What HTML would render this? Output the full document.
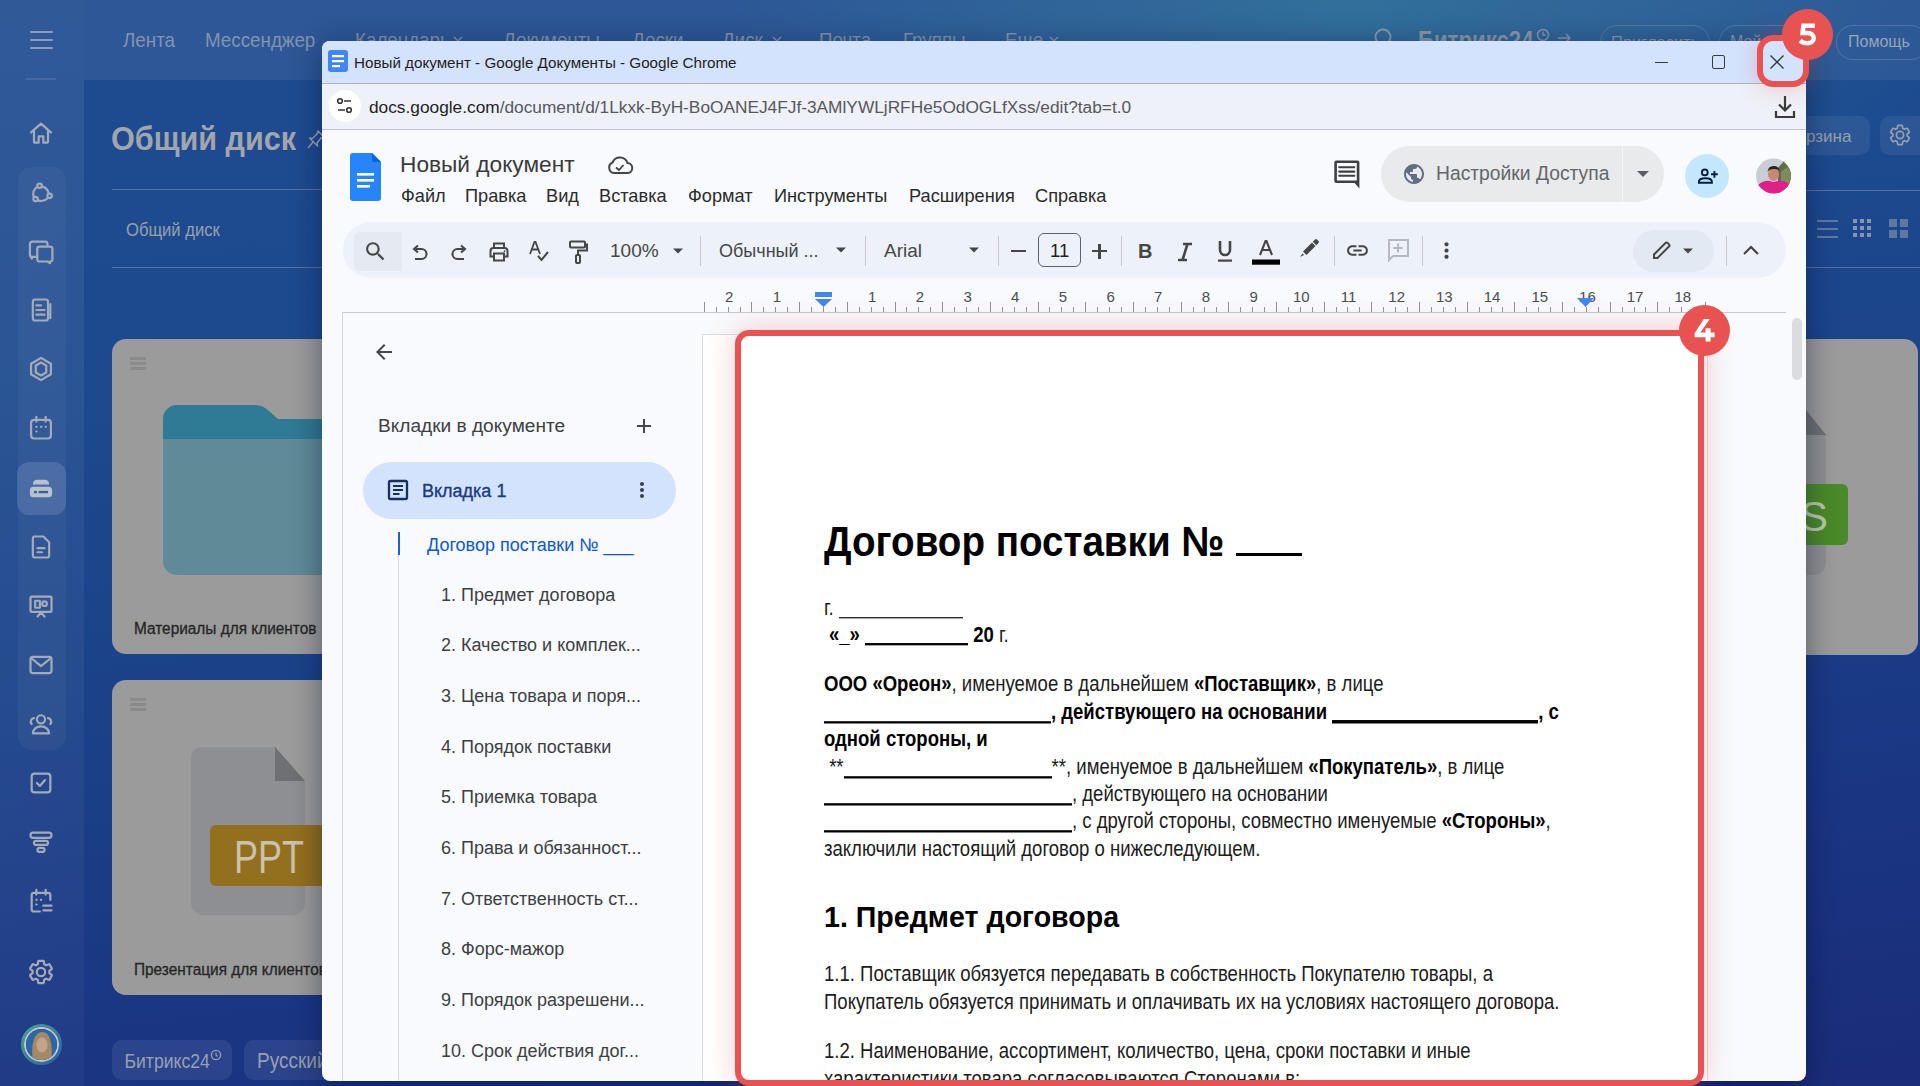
<!DOCTYPE html><html><head><meta charset="utf-8"><style>
html,body{margin:0;padding:0;width:1920px;height:1086px;overflow:hidden;}
body{position:relative;font-family:"Liberation Sans",sans-serif;background:#1d4a8f;}
.t{position:absolute;white-space:pre;line-height:1;}
.dl{color:#1c1c1c;} .dl b{color:#000;}
.r{position:absolute;}
</style></head><body>
<div class="r" style="left:0px;top:0px;width:1920px;height:1086px;background:linear-gradient(172deg,#1f4c90 0%,#1d4a8f 28%,#1b4289 52%,#1a3784 76%,#1b2c79 100%);"></div>
<div class="r" style="left:700px;top:-260px;width:1300px;height:520px;background:radial-gradient(ellipse at center,rgba(40,120,150,0.6) 0%,rgba(40,120,150,0) 70%);"></div>
<div class="r" style="left:0px;top:0px;width:84px;height:1086px;background:linear-gradient(180deg,rgba(255,255,255,0.075),rgba(255,255,255,0.03));"></div>
<div class="r" style="left:84px;top:0px;width:1836px;height:80px;background:rgba(255,255,255,0.065);"></div>
<div class="r" style="left:30px;top:31px;width:23px;height:2px;background:#8d9bb4;border-radius:1px;"></div>
<div class="r" style="left:30px;top:39px;width:23px;height:2px;background:#8d9bb4;border-radius:1px;"></div>
<div class="r" style="left:30px;top:47px;width:23px;height:2px;background:#8d9bb4;border-radius:1px;"></div>
<div class="r" style="left:26px;top:78px;width:30px;height:2px;background:rgba(160,175,200,0.2);"></div>
<div class="r" style="left:18px;top:167px;width:48px;height:583px;background:rgba(255,255,255,0.04);border-radius:14px;"></div>
<div class="r" style="left:17px;top:462px;width:49px;height:53px;background:rgba(255,255,255,0.13);border-radius:12px;"></div>
<svg class="r" style="left:27px;top:119px;" width="28" height="28" viewBox="0 0 24 24"><g fill="none" stroke="#a4abb6" stroke-width="1.9" stroke-linecap="round" stroke-linejoin="round"><path d="M3.5 11.5 L12 4 L20.5 11.5 M6 9.5 V19.5 A0.8 0.8 0 0 0 6.8 20.3 H10 V14.8 H14 V20.3 H17.2 A0.8 0.8 0 0 0 18 19.5 V9.5"/></g></svg>
<svg class="r" style="left:27px;top:179px;" width="28" height="28" viewBox="0 0 24 24"><g fill="none" stroke="#a4abb6" stroke-width="1.9" stroke-linecap="round" stroke-linejoin="round"><circle cx="10.8" cy="5.8" r="1.9"/><circle cx="7.4" cy="17.2" r="1.9"/><circle cx="19.4" cy="14.4" r="1.9"/><path d="M13 6.3 A8 8 0 0 1 18.6 12.3 M17.7 16.5 A8 8 0 0 1 9.4 18.3 M5.7 15.4 A8 8 0 0 1 8.8 6.8"/></g></svg>
<svg class="r" style="left:27px;top:237px;" width="28" height="28" viewBox="0 0 24 24"><g fill="none" stroke="#a4abb6" stroke-width="1.9" stroke-linecap="round" stroke-linejoin="round"><path d="M4.5 4 H15.5 A2 2 0 0 1 17.5 6 V6.8 M8.5 17 H4.5 A2 2 0 0 1 2.5 15 V6 A2 2 0 0 1 4.5 4 M2.8 16.5 L4.2 18.6"/><path d="M10.8 8.3 H19.8 A2 2 0 0 1 21.8 10.3 V19.5 A2 2 0 0 1 19.8 21 V22.5 L17.6 21 H10.8 A2 2 0 0 1 8.8 19 V10.3 A2 2 0 0 1 10.8 8.3Z"/></g></svg>
<svg class="r" style="left:27px;top:296px;" width="28" height="28" viewBox="0 0 24 24"><g fill="none" stroke="#a4abb6" stroke-width="1.9" stroke-linecap="round" stroke-linejoin="round"><rect x="5" y="3" width="13" height="18" rx="2"/><path d="M8 8 H12 M8 12 H15 M8 16 H15 M20 7 V19"/></g></svg>
<svg class="r" style="left:27px;top:355px;" width="28" height="28" viewBox="0 0 24 24"><g fill="none" stroke="#a4abb6" stroke-width="1.9" stroke-linecap="round" stroke-linejoin="round"><path d="M12 2.5 L20.5 7.5 V16.5 L12 21.5 L3.5 16.5 V7.5Z"/><path d="M12 6.5 L16.5 9 V15 L12 17.5 L7.5 15 V9Z"/></g></svg>
<svg class="r" style="left:27px;top:414px;" width="28" height="28" viewBox="0 0 24 24"><g fill="none" stroke="#a4abb6" stroke-width="1.9" stroke-linecap="round" stroke-linejoin="round"><rect x="3.5" y="5" width="17" height="16" rx="2.5"/><path d="M8 2.5 V6.5 M16 2.5 V6.5 M8 11 H8.2 M12 11 H12.2 M16 11 H16.2 M8 15 H8.2"/></g></svg>
<svg class="r" style="left:27px;top:474px;" width="28" height="28" viewBox="0 0 24 24"><rect x="2.5" y="11" width="19" height="9" rx="3" fill="#b8c1cf"/><path d="M5 9 Q5 5 9 5 H15 Q19 5 19 9" fill="#b8c1cf"/><rect x="6" y="14.5" width="2.5" height="2" fill="#3b5f95"/><rect x="10" y="14.5" width="8" height="2" fill="#3b5f95"/></svg>
<svg class="r" style="left:27px;top:533px;" width="28" height="28" viewBox="0 0 24 24"><g fill="none" stroke="#a4abb6" stroke-width="1.9" stroke-linecap="round" stroke-linejoin="round"><path d="M6 3 H14 L19 8 V19 A2 2 0 0 1 17 21 H7 A2 2 0 0 1 5 19 V5 A2 2 0 0 1 6 3Z M9 13 H15 M9 16.5 H13"/></g></svg>
<svg class="r" style="left:27px;top:592px;" width="28" height="28" viewBox="0 0 24 24"><g fill="none" stroke="#a4abb6" stroke-width="1.9" stroke-linecap="round" stroke-linejoin="round"><rect x="3" y="4" width="18" height="13" rx="1"/><rect x="7" y="7.5" width="4" height="6"/><circle cx="15" cy="10" r="2"/><path d="M9 21 L12 17.5 L15 21"/></g></svg>
<svg class="r" style="left:27px;top:651px;" width="28" height="28" viewBox="0 0 24 24"><g fill="none" stroke="#a4abb6" stroke-width="1.9" stroke-linecap="round" stroke-linejoin="round"><rect x="3" y="5" width="18" height="14" rx="2"/><path d="M3.5 6 L12 13 L20.5 6"/></g></svg>
<svg class="r" style="left:27px;top:710px;" width="28" height="28" viewBox="0 0 24 24"><g fill="none" stroke="#a4abb6" stroke-width="1.9" stroke-linecap="round" stroke-linejoin="round"><circle cx="12" cy="8" r="3.5"/><path d="M5 20 A7 6 0 0 1 19 20Z"/><path d="M4 12 A3 3 0 0 1 6 7 M20 12 A3 3 0 0 0 18 7"/></g></svg>
<svg class="r" style="left:27px;top:769px;" width="28" height="28" viewBox="0 0 24 24"><g fill="none" stroke="#a4abb6" stroke-width="1.9" stroke-linecap="round" stroke-linejoin="round"><rect x="4" y="4" width="16" height="16" rx="2.5"/><path d="M8.5 12 L11 14.5 L15.5 9.5"/></g></svg>
<svg class="r" style="left:27px;top:828px;" width="28" height="28" viewBox="0 0 24 24"><g fill="none" stroke="#a4abb6" stroke-width="1.9" stroke-linecap="round" stroke-linejoin="round"><rect x="3" y="4" width="18" height="4.5" rx="2.2"/><rect x="6" y="11" width="12" height="3.5" rx="1.7"/><rect x="9" y="17" width="6" height="3.5" rx="1.7"/></g></svg>
<svg class="r" style="left:27px;top:887px;" width="28" height="28" viewBox="0 0 24 24"><g fill="none" stroke="#a4abb6" stroke-width="1.9" stroke-linecap="round" stroke-linejoin="round"><path d="M20 11 V7 A2 2 0 0 0 18 5 H6 A2 2 0 0 0 4 7 V19 A2 2 0 0 0 6 21 H11 M8 2.5 V6.5 M16 2.5 V6.5 M8 11 H8.2 M12 11 H12.2 M8 15 H8.2 M14 16 H21 M14 20 H21"/></g></svg>
<svg class="r" style="left:27px;top:958px;" width="28" height="28" viewBox="0 0 24 24"><g fill="none" stroke="#a4abb6" stroke-width="1.9" stroke-linecap="round" stroke-linejoin="round"><path d="M19.14 12.94c.04-.3.06-.61.06-.94 0-.32-.02-.64-.07-.94l2.03-1.58c.18-.14.23-.41.12-.61l-1.92-3.32c-.12-.22-.37-.29-.59-.22l-2.39.96c-.5-.38-1.03-.7-1.62-.94l-.36-2.540c-.04-.24-.24-.41-.48-.41h-3.84c-.24 0-.43.17-.47.41l-.36 2.54c-.59.24-1.13.57-1.62.94l-2.39-.96c-.22-.08-.47 0-.59.22L2.74 8.87c-.12.21-.08.47.12.61l2.030 1.58c-.05.3-.09.63-.09.94s.02.64.07.94l-2.03 1.58c-.18.14-.23.41-.12.61l1.92 3.32c.12.22.37.29.59.22l2.39-.96c.5.38 1.03.7 1.62.94l.36 2.54c.05.24.24.41.48.41h3.84c.24 0 .44-.17.47-.41l.36-2.54c.59-.24 1.13-.56 1.62-.94l2.39.96c.22.08.47 0 .59-.22l1.92-3.32c.12-.22.07-.47-.12-.61l-2.01-1.58zM12 15.6c-1.98 0-3.6-1.62-3.6-3.6s1.62-3.6 3.6-3.6 3.6 1.62 3.6 3.6-1.62 3.6-3.6 3.6z"/></g></svg>
<svg class="r" style="left:21px;top:1024px;" width="41" height="41" viewBox="0 0 41 41"><defs><linearGradient id="rg" x1="0" y1="0" x2="1" y2="1"><stop offset="0" stop-color="#46a88c"/><stop offset="1" stop-color="#2a5ea8"/></linearGradient><clipPath id="ac"><circle cx="20.5" cy="20.5" r="15.5"/></clipPath></defs><circle cx="20.5" cy="20.5" r="19" fill="none" stroke="url(#rg)" stroke-width="3"/><circle cx="20.5" cy="20.5" r="16.5" fill="none" stroke="#c4c6cc" stroke-width="2"/><g clip-path="url(#ac)"><rect width="41" height="41" fill="#2c68a6"/><path d="M12 38 Q10 24 13 15 Q16 8 21 8 Q27 8 29 15 Q32 24 30 38Z" fill="#a48a62"/><ellipse cx="21" cy="21" rx="5.6" ry="7.5" fill="#c2a48c"/><path d="M14 40 Q21 32 28 40Z" fill="#b8b8b8"/></g></svg>
<div class="t " style="left:123px;top:31.59px;font-size:18.8px;color:#8593ab;transform:scaleY(1.1);transform-origin:0 15.91px;">Лента</div>
<div class="t " style="left:205px;top:31.59px;font-size:18.8px;color:#8593ab;transform:scaleY(1.1);transform-origin:0 15.91px;">Мессенджер</div>
<div class="t " style="left:355px;top:31.59px;font-size:18.8px;color:#8593ab;transform:scaleY(1.1);transform-origin:0 15.91px;">Календарь</div>
<div class="t " style="left:503px;top:31.59px;font-size:18.8px;color:#8593ab;transform:scaleY(1.1);transform-origin:0 15.91px;">Документы</div>
<div class="t " style="left:632px;top:31.59px;font-size:18.8px;color:#8593ab;transform:scaleY(1.1);transform-origin:0 15.91px;">Доски</div>
<div class="t " style="left:722px;top:31.59px;font-size:18.8px;color:#8593ab;transform:scaleY(1.1);transform-origin:0 15.91px;">Диск</div>
<div class="t " style="left:819px;top:31.59px;font-size:18.8px;color:#8593ab;transform:scaleY(1.1);transform-origin:0 15.91px;">Почта</div>
<div class="t " style="left:903px;top:31.59px;font-size:18.8px;color:#8593ab;transform:scaleY(1.1);transform-origin:0 15.91px;">Группы</div>
<div class="t " style="left:1005px;top:31.59px;font-size:18.8px;color:#8593ab;transform:scaleY(1.1);transform-origin:0 15.91px;">Еще</div>
<svg class="r" style="left:453px;top:35px;" width="10" height="8" viewBox="0 0 10 8"><path d="M1 2 L5 6 L9 2" fill="none" stroke="#8593ab" stroke-width="1.5"/></svg>
<svg class="r" style="left:772px;top:35px;" width="10" height="8" viewBox="0 0 10 8"><path d="M1 2 L5 6 L9 2" fill="none" stroke="#8593ab" stroke-width="1.5"/></svg>
<svg class="r" style="left:1049px;top:35px;" width="10" height="8" viewBox="0 0 10 8"><path d="M1 2 L5 6 L9 2" fill="none" stroke="#8593ab" stroke-width="1.5"/></svg>
<div class="t " style="left:1418px;top:30.91px;font-size:22.2px;color:#8a96a8;font-weight:bold;transform:scaleY(1.2);transform-origin:0 18.79px;">Битрикс24</div>
<svg class="r" style="left:1372px;top:27px;" width="24" height="24" viewBox="0 0 24 24"><circle cx="11" cy="10" r="7.5" fill="none" stroke="#8a96a8" stroke-width="2"/></svg>
<svg class="r" style="left:1536px;top:28px;" width="14" height="14" viewBox="0 0 14 14"><circle cx="7" cy="7" r="5.5" fill="none" stroke="#8a96a8" stroke-width="1.5"/><path d="M7 3.5 V7 H9.5" fill="none" stroke="#8a96a8" stroke-width="1.3"/></svg>
<svg class="r" style="left:1557px;top:32px;" width="16" height="12" viewBox="0 0 16 12"><path d="M1 6 H13 M9 2 L13 6 L9 10" fill="none" stroke="#8a96a8" stroke-width="1.5"/></svg>
<div class="r" style="left:1600px;top:25px;width:108px;height:33px;border:1.5px solid rgba(150,165,185,0.35);border-radius:17px;"></div>
<div class="t " style="left:1611px;top:34.03px;font-size:16.5px;color:#8a96a8;">Пригласить</div>
<div class="r" style="left:1719px;top:25px;width:96px;height:33px;border:1.5px solid rgba(150,165,185,0.35);border-radius:17px;"></div>
<div class="t " style="left:1730px;top:34.46px;font-size:16px;color:#8a96a8;">Мой тариф</div>
<div class="r" style="left:1836px;top:25px;width:90px;height:33px;border:1.5px solid rgba(150,165,185,0.35);border-radius:17px;"></div>
<div class="t " style="left:1848px;top:34.46px;font-size:16px;color:#98a4b4;">Помощь</div>
<div class="t " style="left:111px;top:123.60px;font-size:30.6px;color:#a2a5ab;font-weight:bold;transform:scaleY(1.1);transform-origin:0 25.90px;">Общий диск</div>
<div class="r" style="left:112px;top:189px;width:210px;height:1px;background:rgba(150,165,190,0.45);"></div>
<div class="t " style="left:126px;top:222.95px;font-size:16.6px;color:#98a0ac;transform:scaleY(1.1);transform-origin:0 14.05px;">Общий диск</div>
<div class="r" style="left:112px;top:267px;width:210px;height:1px;background:rgba(150,165,190,0.45);"></div>
<div class="r" style="left:1790px;top:116px;width:80px;height:39px;background:rgba(255,255,255,0.07);border-radius:10px;"></div>
<div class="t " style="left:1806px;top:127.61px;font-size:17px;color:#98a0ac;">рзина</div>
<div class="r" style="left:1880px;top:116px;width:50px;height:39px;background:rgba(255,255,255,0.07);border-radius:10px;"></div>
<svg class="r" style="left:1888px;top:123px;" width="24" height="24" viewBox="0 0 24 24"><path d="M19.14 12.94c.04-.3.06-.61.06-.94 0-.32-.02-.64-.07-.94l2.03-1.58c.18-.14.23-.41.12-.61l-1.92-3.32c-.12-.22-.37-.29-.59-.22l-2.39.96c-.5-.38-1.03-.7-1.62-.94l-.36-2.540c-.04-.24-.24-.41-.48-.41h-3.84c-.24 0-.43.17-.47.41l-.36 2.54c-.59.24-1.13.57-1.62.94l-2.39-.96c-.22-.08-.47 0-.59.22L2.74 8.87c-.12.21-.08.47.12.61l2.030 1.58c-.05.3-.09.63-.09.94s.02.64.07.94l-2.03 1.58c-.18.14-.23.41-.12.61l1.92 3.32c.12.22.37.29.59.22l2.39-.96c.5.38 1.03.7 1.62.94l.36 2.54c.05.24.24.41.48.41h3.84c.24 0 .44-.17.47-.41l.36-2.54c.59-.24 1.13-.56 1.62-.94l2.39.96c.22.08.47 0 .59-.22l1.92-3.32c.12-.22.07-.47-.12-.61l-2.01-1.58zM12 15.6c-1.98 0-3.6-1.62-3.6-3.6s1.62-3.6 3.6-3.6 3.6 1.62 3.6 3.6-1.62 3.6-3.6 3.6z" fill="none" stroke="#98a0ac" stroke-width="1.7"/></svg>
<div class="r" style="left:1806px;top:190px;width:114px;height:1px;background:rgba(150,165,190,0.45);"></div>
<div class="r" style="left:1806px;top:267px;width:114px;height:1px;background:rgba(150,165,190,0.45);"></div>
<div class="r" style="left:1817px;top:220px;width:21px;height:2px;background:rgba(150,160,175,0.55);"></div>
<div class="r" style="left:1817px;top:228px;width:21px;height:2px;background:rgba(150,160,175,0.55);"></div>
<div class="r" style="left:1817px;top:236px;width:21px;height:2px;background:rgba(150,160,175,0.55);"></div>
<div class="r" style="left:1853px;top:219px;width:4px;height:4px;background:rgba(170,175,185,0.75);"></div>
<div class="r" style="left:1853px;top:226px;width:4px;height:4px;background:rgba(170,175,185,0.75);"></div>
<div class="r" style="left:1853px;top:233px;width:4px;height:4px;background:rgba(170,175,185,0.75);"></div>
<div class="r" style="left:1860px;top:219px;width:4px;height:4px;background:rgba(170,175,185,0.75);"></div>
<div class="r" style="left:1860px;top:226px;width:4px;height:4px;background:rgba(170,175,185,0.75);"></div>
<div class="r" style="left:1860px;top:233px;width:4px;height:4px;background:rgba(170,175,185,0.75);"></div>
<div class="r" style="left:1867px;top:219px;width:4px;height:4px;background:rgba(170,175,185,0.75);"></div>
<div class="r" style="left:1867px;top:226px;width:4px;height:4px;background:rgba(170,175,185,0.75);"></div>
<div class="r" style="left:1867px;top:233px;width:4px;height:4px;background:rgba(170,175,185,0.75);"></div>
<div class="r" style="left:1889px;top:219px;width:8px;height:8px;background:rgba(150,160,175,0.55);"></div>
<div class="r" style="left:1889px;top:230px;width:8px;height:8px;background:rgba(150,160,175,0.55);"></div>
<div class="r" style="left:1900px;top:219px;width:8px;height:8px;background:rgba(150,160,175,0.55);"></div>
<div class="r" style="left:1900px;top:230px;width:8px;height:8px;background:rgba(150,160,175,0.55);"></div>
<div class="r" style="left:112px;top:339px;width:300px;height:315px;background:#9b9b9b;border-radius:14px;"></div>
<div class="r" style="left:112px;top:680px;width:300px;height:315px;background:#9b9b9b;border-radius:14px;"></div>
<div class="r" style="left:1790px;top:339px;width:128px;height:316px;background:#9b9b9b;border-radius:14px;"></div>
<div class="r" style="left:130px;top:357px;width:16px;height:2.5px;background:#8a8a8a;"></div>
<div class="r" style="left:130px;top:362px;width:16px;height:2.5px;background:#8a8a8a;"></div>
<div class="r" style="left:130px;top:367px;width:16px;height:2.5px;background:#8a8a8a;"></div>
<div class="r" style="left:130px;top:698px;width:16px;height:2.5px;background:#8a8a8a;"></div>
<div class="r" style="left:130px;top:703px;width:16px;height:2.5px;background:#8a8a8a;"></div>
<div class="r" style="left:130px;top:708px;width:16px;height:2.5px;background:#8a8a8a;"></div>
<svg class="r" style="left:163px;top:405px;" width="200" height="170" viewBox="0 0 200 170"><path d="M0 14 A14 14 0 0 1 14 0 H92 Q100 0 106 6 L115 14 H200 V40 H0Z" fill="#2f7a94"/><path d="M0 34 H200 V170 H14 A14 14 0 0 1 0 156Z" fill="#5f8b98"/></svg>
<div class="t " style="left:134px;top:620.96px;font-size:15.4px;color:#262626;transform:scaleY(1.1);transform-origin:0 13.04px;-webkit-text-stroke:0.3px #262626;">Материалы для клиентов</div>
<div class="t " style="left:134px;top:961.96px;font-size:15.4px;color:#262626;transform:scaleY(1.1);transform-origin:0 13.04px;-webkit-text-stroke:0.3px #262626;">Презентация для клиентов</div>
<svg class="r" style="left:191px;top:747px;" width="120" height="168" viewBox="0 0 120 168"><path d="M10 0 H84 L114 34 V156 A12 12 0 0 1 102 168 H12 A12 12 0 0 1 0 156 V10 A10 10 0 0 1 10 0Z" fill="#8e8f92"/><path d="M84 0 L114 34 H84Z" fill="#6f7073"/></svg>
<div class="r" style="left:210px;top:825px;width:140px;height:61px;background:#93701e;border-radius:6px;"></div>
<div class="t " style="left:234px;top:842.53px;font-size:36px;color:#c9c2ae;transform:scaleY(1.3);transform-origin:0 30.47px;">PPT</div>
<svg class="r" style="left:1790px;top:405px;" width="60" height="170" viewBox="0 0 60 170"><path d="M0 0 H12 L36 30 V158 A12 12 0 0 1 24 170 H0Z" fill="#8e8f92"/><path d="M12 0 L36 30 H12Z" fill="#6f7073"/></svg>
<div class="r" style="left:1780px;top:484px;width:68px;height:61px;background:#4a8a2a;border-radius:6px;"></div>
<div class="t " style="left:1800px;top:496.45px;font-size:42px;color:#b8c8a8;">S</div>
<div class="r" style="left:112px;top:1040px;width:120px;height:40px;background:rgba(255,255,255,0.08);border-radius:10px;"></div>
<div class="t " style="left:124.5px;top:1054.10px;font-size:17.6px;color:#98a0b0;transform:scaleY(1.15);transform-origin:0 14.90px;">Битрикс24</div>
<svg class="r" style="left:210px;top:1049px;" width="12" height="12" viewBox="0 0 12 12"><circle cx="6" cy="6" r="4.6" fill="none" stroke="#98a0b0" stroke-width="1.3"/><path d="M6 3.5 V6 L7.5 7.5" fill="none" stroke="#98a0b0" stroke-width="1.1"/></svg>
<div class="r" style="left:244px;top:1040px;width:90px;height:40px;background:rgba(255,255,255,0.08);border-radius:10px;"></div>
<div class="t " style="left:257px;top:1051.92px;font-size:19px;color:#98a0b0;transform:scaleY(1.12);transform-origin:0 16.08px;">Русский</div>
<div class="r" style="left:322px;top:41px;width:1484px;height:1040px;border-radius:8px;box-shadow:0 6px 30px rgba(0,10,40,0.45);"></div>
<svg class="r" style="left:306px;top:129px;" width="20" height="22" viewBox="0 0 20 22"><path d="M12 2 L18 8 L15 9 L11 14 L11.5 17 L3.5 9 L6.5 9.5 L11 5Z M7 13 L2 19" fill="none" stroke="#7f8ca3" stroke-width="1.5" stroke-linejoin="round"/></svg>
<div class="r" style="left:322px;top:41px;width:1484px;height:1040px;background:#f8fafd;border-radius:8px;overflow:hidden;"></div>
<div class="r" style="left:322px;top:41px;width:1484px;height:42px;background:#d3e3fd;border-radius:8px 8px 0 0;"></div>
<div class="r" style="left:322px;top:83px;width:1484px;height:1px;background:#a9b4c4;"></div>
<div class="r" style="left:322px;top:84px;width:1484px;height:45px;background:#eef1f8;"></div>
<div class="r" style="left:322px;top:129px;width:1484px;height:1px;background:#bcc2cc;"></div>
<svg class="r" style="left:328px;top:50px;" width="20" height="22" viewBox="0 0 20 22"><rect x="0" y="0" width="20" height="22" rx="3" fill="#4285f4"/><rect x="4" y="5" width="12" height="2.2" fill="#fff"/><rect x="4" y="10" width="12" height="2.2" fill="#fff"/><rect x="4" y="15" width="8" height="2.2" fill="#fff"/></svg>
<div class="t " style="left:354px;top:55.13px;font-size:15.2px;color:#1f1f1f;">Новый документ - Google Документы - Google Chrome</div>
<div class="r" style="left:1655px;top:61.5px;width:13px;height:1.2px;background:#3a3a3a;"></div>
<div class="r" style="left:1712px;top:55px;width:13px;height:14px;border:1.3px solid #3a3a3a;border-radius:2px;box-sizing:border-box;"></div>
<svg class="r" style="left:1770px;top:55px;" width="14" height="14" viewBox="0 0 14 14"><path d="M0.5 0.5 L13.5 13.5 M13.5 0.5 L0.5 13.5" stroke="#333" stroke-width="1.3"/></svg>
<div class="r" style="left:329px;top:90px;width:32px;height:32px;background:#fff;border-radius:50%;"></div>
<svg class="r" style="left:335px;top:96px;" width="20" height="20" viewBox="0 0 20 20"><circle cx="5" cy="5" r="2.3" fill="none" stroke="#333" stroke-width="1.6"/><path d="M9 5 H16 M3 14 H10" stroke="#333" stroke-width="1.6"/><circle cx="14" cy="14" r="2.3" fill="none" stroke="#333" stroke-width="1.6"/></svg>
<div class="t " style="left:369px;top:99.36px;font-size:17.3px;color:#1f1f1f;">docs.google.com<span style="color:#55585c">/document/d/1Lkxk-ByH-BoOANEJ4FJf-3AMlYWLjRFHe5OdOGLfXss/edit?tab=t.0</span></div>
<svg class="r" style="left:1773px;top:94px;" width="24" height="26" viewBox="0 0 24 26"><path d="M12 2 V16 M6 10.5 L12 16.5 L18 10.5" fill="none" stroke="#3a3a3a" stroke-width="2.2"/><path d="M3 17 V23 H21 V17" fill="none" stroke="#3a3a3a" stroke-width="2.2"/></svg>
<svg class="r" style="left:350px;top:153px;" width="31" height="48" viewBox="0 0 31 48"><path d="M3 0 H22 L31 9 V45 A3 3 0 0 1 28 48 H3 A3 3 0 0 1 0 45 V3 A3 3 0 0 1 3 0Z" fill="#2684fc"/><path d="M22 0 L31 9 H24 A2 2 0 0 1 22 7Z" fill="#0066da"/><rect x="7" y="20" width="17" height="2.6" fill="#fff"/><rect x="7" y="26" width="17" height="2.6" fill="#fff"/><rect x="7" y="32" width="13" height="2.6" fill="#fff"/></svg>
<div class="t " style="left:400px;top:152.78px;font-size:22.7px;color:#3a3a3a;">Новый документ</div>
<svg class="r" style="left:606px;top:153.5px;" width="28" height="24" viewBox="0 0 28 24"><path d="M8 19 H21 A5 5 0 0 0 21.5 9 A8 8 0 0 0 6.5 8.5 A5.5 5.5 0 0 0 8 19Z" fill="none" stroke="#444" stroke-width="2"/><path d="M10 13.5 L13 16 L17.5 11" fill="none" stroke="#444" stroke-width="1.8"/></svg>
<div class="t " style="left:401px;top:186.59px;font-size:18.2px;color:#2b2b2b;">Файл</div>
<div class="t " style="left:465px;top:186.59px;font-size:18.2px;color:#2b2b2b;">Правка</div>
<div class="t " style="left:546px;top:186.59px;font-size:18.2px;color:#2b2b2b;">Вид</div>
<div class="t " style="left:599px;top:186.59px;font-size:18.2px;color:#2b2b2b;">Вставка</div>
<div class="t " style="left:688px;top:186.59px;font-size:18.2px;color:#2b2b2b;">Формат</div>
<div class="t " style="left:774px;top:186.59px;font-size:18.2px;color:#2b2b2b;">Инструменты</div>
<div class="t " style="left:909px;top:186.59px;font-size:18.2px;color:#2b2b2b;">Расширения</div>
<div class="t " style="left:1035px;top:186.59px;font-size:18.2px;color:#2b2b2b;">Справка</div>
<svg class="r" style="left:1333px;top:159px;" width="28" height="31" viewBox="0 0 28 31"><path fill-rule="evenodd" fill="#3d3f40" d="M3.3 1.4 H24.4 A2 2 0 0 1 26.4 3.4 V29.6 L21.6 24 H3.3 A2 2 0 0 1 1.3 22 V3.4 A2 2 0 0 1 3.3 1.4Z M3.9 4 V21.4 H23.8 V4Z"/><path d="M6.2 8.3 H21.3 M6.2 12.6 H21.3 M6.2 16.8 H21.3" stroke="#3d3f40" stroke-width="2.1" stroke-linecap="round"/></svg>
<div class="r" style="left:1381px;top:146px;width:283px;height:56px;background:#e9eaec;border-radius:28px;"></div>
<div class="r" style="left:1622px;top:146px;width:1px;height:56px;background:#f5f6f7;"></div>
<svg class="r" style="left:1402px;top:162px;" width="24" height="24" viewBox="0 0 24 24"><path fill="#5f6e82" d="M12 2C6.48 2 2 6.48 2 12s4.48 10 10 10 10-4.48 10-10S17.52 2 12 2zm-1 17.93c-3.95-.49-7-3.85-7-7.93 0-.62.08-1.21.21-1.79L9 15v1c0 1.1.9 2 2 2v1.93zm6.9-2.54c-.26-.81-1-1.39-1.9-1.39h-1v-3c0-.55-.45-1-1-1H8v-2h2c.55 0 1-.45 1-1V7h2c1.1 0 2-.9 2-2v-.41c2.93 1.19 5 4.06 5 7.41 0 2.08-.8 3.97-2.1 5.39z"/></svg>
<div class="t " style="left:1436px;top:163.66px;font-size:19.3px;color:#636669;">Настройки Доступа</div>
<svg class="r" style="left:1635px;top:166px;" width="16" height="16" viewBox="0 0 16 16"><path d="M2 5 L8 11 L14 5Z" fill="#5a5e64"/></svg>
<div class="r" style="left:1685px;top:154px;width:44px;height:44px;background:#c2e7ff;border-radius:50%;"></div>
<svg class="r" style="left:1695px;top:166px;" width="24" height="20" viewBox="0 0 24 20"><circle cx="9.8" cy="6.4" r="2.9" fill="none" stroke="#0a1f3a" stroke-width="1.9"/><path d="M3.9 16.7 V15.8 Q3.9 12.3 10.4 12.3 Q16.9 12.3 16.9 15.8 V16.7Z" fill="none" stroke="#0a1f3a" stroke-width="1.9"/><path d="M19.4 4.9 V11.7 M16 8.3 H22.8" stroke="#0a1f3a" stroke-width="1.9"/></svg>
<svg class="r" style="left:1756px;top:158px;" width="35" height="36" viewBox="0 0 35 36"><defs><clipPath id="av"><circle cx="17.5" cy="18" r="17.5"/></clipPath></defs><g clip-path="url(#av)"><rect width="35" height="36" fill="#c9ced6"/><path d="M22 10 L28 3 L35 8 V36 H22Z" fill="#5d6e48"/><path d="M25 14 L31 9 L35 14 V30 H25Z" fill="#7c8c5c"/><ellipse cx="17.5" cy="16.5" rx="5.5" ry="6.5" fill="#c98774"/><path d="M11.5 14 Q12 8 17.5 8 Q23 8 23.5 13 Q21 10.5 17.5 11 Q13 11 11.5 14Z" fill="#2a2220"/><path d="M2 27 Q8 22 14 23 Q17.5 25 21 23 Q28 22 33 26 L35 36 H0Z" fill="#e0208a"/></g></svg>
<div class="r" style="left:343px;top:222px;width:1443px;height:56px;background:#edf2fa;border-radius:28px;"></div>
<div class="r" style="left:354px;top:232px;width:48px;height:39px;background:#e4e9f2;border-radius:6px 0 0 6px;"></div>
<svg class="r" style="left:363px;top:239px;" width="25" height="25" viewBox="0 0 24 24"><path fill="#444746" d="M15.5 14h-.79l-.28-.27C15.41 12.59 16 11.11 16 9.5 16 5.91 13.09 3 9.5 3S3 5.91 3 9.5 5.91 16 9.5 16c1.61 0 3.09-.59 4.23-1.57l.27.28v.79l5 4.99L20.49 19l-4.99-5zm-6 0C7.01 14 5 11.99 5 9.5S7.01 5 9.5 5 14 7.01 14 9.5 11.99 14 9.5 14z"/></svg>
<svg class="r" style="left:407px;top:241px;" width="24" height="24" viewBox="0 0 24 24"><path d="M8.5 8 H14.5 A5 5 0 0 1 14.5 18 H8" fill="none" stroke="#444746" stroke-width="2.1"/><path d="M11 4.5 L7 8 L11 11.5" fill="none" stroke="#444746" stroke-width="2.1"/></svg>
<svg class="r" style="left:448px;top:241px;" width="24" height="24" viewBox="0 0 24 24"><path d="M15.5 8 H9.5 A5 5 0 0 0 9.5 18 H16" fill="none" stroke="#444746" stroke-width="2.1"/><path d="M13 4.5 L17 8 L13 11.5" fill="none" stroke="#444746" stroke-width="2.1"/></svg>
<svg class="r" style="left:487px;top:240px;" width="24" height="24" viewBox="0 0 24 24"><path d="M7 8 V3.5 H17 V8" fill="none" stroke="#444746" stroke-width="2"/><path d="M7 16.5 H3.5 V11 A3 3 0 0 1 6.5 8 H17.5 A3 3 0 0 1 20.5 11 V16.5 H17" fill="none" stroke="#444746" stroke-width="2"/><rect x="7" y="13.5" width="10" height="7" fill="none" stroke="#444746" stroke-width="2"/><circle cx="17.5" cy="11.2" r="0.9" fill="#444746"/></svg>
<svg class="r" style="left:527px;top:239px;" width="24" height="26" viewBox="0 0 24 26"><path d="M3 15 L7.5 3 H8.5 L13 15 M4.8 10.5 H11.2" fill="none" stroke="#444746" stroke-width="1.8"/><path d="M11 17 L14.5 21 L21 13" fill="none" stroke="#444746" stroke-width="2"/></svg>
<svg class="r" style="left:566px;top:239px;" width="24" height="28" viewBox="0 0 24 28"><rect x="4" y="2.5" width="15" height="6" rx="1" fill="none" stroke="#444746" stroke-width="2"/><path d="M19 5.5 H21 V11.5 H12 V16" fill="none" stroke="#444746" stroke-width="2"/><rect x="10" y="16" width="4" height="8" rx="1" fill="none" stroke="#444746" stroke-width="2"/></svg>
<div class="t " style="left:610px;top:241.42px;font-size:19px;color:#444746;">100%</div>
<svg class="r" style="left:671px;top:244px;" width="14" height="14" viewBox="0 0 14 14"><path d="M2 4.5 L7 9.5 L12 4.5Z" fill="#444746"/></svg>
<div class="r" style="left:700px;top:236px;width:1px;height:30px;background:#c7c9cc;"></div>
<div class="t " style="left:719px;top:242.26px;font-size:18px;color:#444746;">Обычный ...</div>
<svg class="r" style="left:834px;top:243px;" width="14" height="14" viewBox="0 0 14 14"><path d="M2 4.5 L7 9.5 L12 4.5Z" fill="#444746"/></svg>
<div class="r" style="left:865px;top:236px;width:1px;height:30px;background:#c7c9cc;"></div>
<div class="t " style="left:884px;top:241.42px;font-size:19px;color:#444746;">Arial</div>
<svg class="r" style="left:967px;top:243px;" width="14" height="14" viewBox="0 0 14 14"><path d="M2 4.5 L7 9.5 L12 4.5Z" fill="#444746"/></svg>
<div class="r" style="left:998px;top:236px;width:1px;height:30px;background:#c7c9cc;"></div>
<div class="r" style="left:1011px;top:250px;width:15px;height:2.2px;background:#444746;"></div>
<div class="r" style="left:1038px;top:233px;width:43px;height:34px;border:1.5px solid #5f6368;border-radius:6px;box-sizing:border-box;"></div>
<div class="t " style="left:1050px;top:241.84px;font-size:18.5px;color:#1f1f1f;">11</div>
<div class="r" style="left:1092px;top:250px;width:15px;height:2.2px;background:#444746;"></div>
<div class="r" style="left:1098.4px;top:243.6px;width:2.2px;height:15px;background:#444746;"></div>
<div class="r" style="left:1121px;top:236px;width:1px;height:30px;background:#c7c9cc;"></div>
<div class="t " style="left:1138px;top:241.07px;font-size:20px;color:#444746;font-weight:bold;">B</div>
<svg class="r" style="left:1173px;top:240px;" width="24" height="24" viewBox="0 0 24 24"><path d="M10 4 H19 M5 20 H14 M14.5 4 L9.5 20" fill="none" stroke="#444746" stroke-width="2.6"/></svg>
<svg class="r" style="left:1212.5px;top:238px;" width="24" height="26" viewBox="0 0 24 26"><path d="M7 3 V12 A5 5 0 0 0 17 12 V3" fill="none" stroke="#444746" stroke-width="2.6"/><rect x="5" y="21.5" width="14" height="2.2" fill="#444746"/></svg>
<svg class="r" style="left:1251px;top:237px;" width="30" height="30" viewBox="0 0 30 30"><path d="M9 18 L14.5 4 H15.5 L21 18 M11 13 H19" fill="none" stroke="#444746" stroke-width="2.1"/><rect x="1" y="22.5" width="28" height="5.2" fill="#000"/></svg>
<svg class="r" style="left:1297px;top:236px;" width="24" height="24" viewBox="0 0 24 24"><path d="M3 21 L5.5 17.5 L7 19 Z M6 15.5 L15 6.5 L18.5 10 L9.5 19Z M15.8 5.7 L18 3.5 Q19 2.6 20 3.5 L21.5 5 Q22.4 6 21.5 7 L19.3 9.2Z" fill="#444746"/></svg>
<div class="r" style="left:1334px;top:236px;width:1px;height:30px;background:#c7c9cc;"></div>
<svg class="r" style="left:1345px;top:238px;" width="25" height="25" viewBox="0 0 24 24"><path fill="#444746" d="M3.9 12c0-1.71 1.39-3.1 3.1-3.1h4V7H7c-2.76 0-5 2.24-5 5s2.24 5 5 5h4v-1.9H7c-1.71 0-3.1-1.39-3.1-3.1zM8 13h8v-2H8v2zm9-6h-4v1.9h4c1.71 0 3.1 1.39 3.1 3.1s-1.39 3.1-3.1 3.1h-4V17h4c2.76 0 5-2.24 5-5s-2.24-5-5-5z"/></svg>
<svg class="r" style="left:1386px;top:238px;" width="24" height="26" viewBox="0 0 24 26"><path d="M2 2 H22 V18 H7 L3 22 V2Z" fill="none" stroke="#b5b8bc" stroke-width="2"/><path d="M12 5.5 V14.5 M7.5 10 H16.5" stroke="#b5b8bc" stroke-width="2"/></svg>
<div class="r" style="left:1422px;top:236px;width:1px;height:30px;background:#c7c9cc;"></div>
<svg class="r" style="left:1434px;top:238px;" width="25" height="25" viewBox="0 0 24 24"><path fill="#444746" d="M12 8c1.1 0 2-.9 2-2s-.9-2-2-2-2 .9-2 2 .9 2 2 2zm0 2c-1.1 0-2 .9-2 2s.9 2 2 2 2-.9 2-2-.9-2-2-2zm0 6c-1.1 0-2 .9-2 2s.9 2 2 2 2-.9 2-2-.9-2-2-2z"/></svg>
<div class="r" style="left:1633px;top:230px;width:81px;height:42px;background:#e3e9f3;border-radius:21px;"></div>
<svg class="r" style="left:1650px;top:238px;" width="24" height="24" viewBox="0 0 24 24"><path d="M4 20 V16.5 L15.5 5 A1.5 1.5 0 0 1 17.6 5 L19 6.4 A1.5 1.5 0 0 1 19 8.5 L7.5 20Z" fill="none" stroke="#444746" stroke-width="2"/></svg>
<svg class="r" style="left:1681px;top:244px;" width="14" height="14" viewBox="0 0 14 14"><path d="M2 4.5 L7 9.5 L12 4.5Z" fill="#444746"/></svg>
<div class="r" style="left:1726px;top:236px;width:1px;height:30px;background:#c7c9cc;"></div>
<svg class="r" style="left:1741px;top:242px;" width="20" height="16" viewBox="0 0 20 16"><path d="M3 12 L10 5 L17 12" fill="none" stroke="#444746" stroke-width="2.2"/></svg>
<div class="r" style="left:0;top:0;width:1920px;height:1081px;overflow:hidden;"><div class="r" style="left:342px;top:312px;width:1444px;height:1px;background:#c8cacd;"></div>
<div class="r" style="left:704px;top:302px;width:1px;height:10px;background:#8f9296;"></div>
<div class="r" style="left:716px;top:307px;width:1px;height:5px;background:#8f9296;"></div>
<div class="r" style="left:728px;top:307px;width:1px;height:5px;background:#8f9296;"></div>
<div class="r" style="left:740px;top:307px;width:1px;height:5px;background:#8f9296;"></div>
<div class="r" style="left:751px;top:302px;width:1px;height:10px;background:#8f9296;"></div>
<div class="r" style="left:763px;top:307px;width:1px;height:5px;background:#8f9296;"></div>
<div class="r" style="left:775px;top:307px;width:1px;height:5px;background:#8f9296;"></div>
<div class="r" style="left:787px;top:307px;width:1px;height:5px;background:#8f9296;"></div>
<div class="r" style="left:799px;top:302px;width:1px;height:10px;background:#8f9296;"></div>
<div class="r" style="left:811px;top:307px;width:1px;height:5px;background:#8f9296;"></div>
<div class="r" style="left:823px;top:307px;width:1px;height:5px;background:#8f9296;"></div>
<div class="r" style="left:835px;top:307px;width:1px;height:5px;background:#8f9296;"></div>
<div class="r" style="left:847px;top:302px;width:1px;height:10px;background:#8f9296;"></div>
<div class="r" style="left:859px;top:307px;width:1px;height:5px;background:#8f9296;"></div>
<div class="r" style="left:871px;top:307px;width:1px;height:5px;background:#8f9296;"></div>
<div class="r" style="left:883px;top:307px;width:1px;height:5px;background:#8f9296;"></div>
<div class="r" style="left:895px;top:302px;width:1px;height:10px;background:#8f9296;"></div>
<div class="r" style="left:906px;top:307px;width:1px;height:5px;background:#8f9296;"></div>
<div class="r" style="left:918px;top:307px;width:1px;height:5px;background:#8f9296;"></div>
<div class="r" style="left:930px;top:307px;width:1px;height:5px;background:#8f9296;"></div>
<div class="r" style="left:942px;top:302px;width:1px;height:10px;background:#8f9296;"></div>
<div class="r" style="left:954px;top:307px;width:1px;height:5px;background:#8f9296;"></div>
<div class="r" style="left:966px;top:307px;width:1px;height:5px;background:#8f9296;"></div>
<div class="r" style="left:978px;top:307px;width:1px;height:5px;background:#8f9296;"></div>
<div class="r" style="left:990px;top:302px;width:1px;height:10px;background:#8f9296;"></div>
<div class="r" style="left:1002px;top:307px;width:1px;height:5px;background:#8f9296;"></div>
<div class="r" style="left:1014px;top:307px;width:1px;height:5px;background:#8f9296;"></div>
<div class="r" style="left:1026px;top:307px;width:1px;height:5px;background:#8f9296;"></div>
<div class="r" style="left:1038px;top:302px;width:1px;height:10px;background:#8f9296;"></div>
<div class="r" style="left:1049px;top:307px;width:1px;height:5px;background:#8f9296;"></div>
<div class="r" style="left:1061px;top:307px;width:1px;height:5px;background:#8f9296;"></div>
<div class="r" style="left:1073px;top:307px;width:1px;height:5px;background:#8f9296;"></div>
<div class="r" style="left:1085px;top:302px;width:1px;height:10px;background:#8f9296;"></div>
<div class="r" style="left:1097px;top:307px;width:1px;height:5px;background:#8f9296;"></div>
<div class="r" style="left:1109px;top:307px;width:1px;height:5px;background:#8f9296;"></div>
<div class="r" style="left:1121px;top:307px;width:1px;height:5px;background:#8f9296;"></div>
<div class="r" style="left:1133px;top:302px;width:1px;height:10px;background:#8f9296;"></div>
<div class="r" style="left:1145px;top:307px;width:1px;height:5px;background:#8f9296;"></div>
<div class="r" style="left:1157px;top:307px;width:1px;height:5px;background:#8f9296;"></div>
<div class="r" style="left:1169px;top:307px;width:1px;height:5px;background:#8f9296;"></div>
<div class="r" style="left:1181px;top:302px;width:1px;height:10px;background:#8f9296;"></div>
<div class="r" style="left:1193px;top:307px;width:1px;height:5px;background:#8f9296;"></div>
<div class="r" style="left:1204px;top:307px;width:1px;height:5px;background:#8f9296;"></div>
<div class="r" style="left:1216px;top:307px;width:1px;height:5px;background:#8f9296;"></div>
<div class="r" style="left:1228px;top:302px;width:1px;height:10px;background:#8f9296;"></div>
<div class="r" style="left:1240px;top:307px;width:1px;height:5px;background:#8f9296;"></div>
<div class="r" style="left:1252px;top:307px;width:1px;height:5px;background:#8f9296;"></div>
<div class="r" style="left:1264px;top:307px;width:1px;height:5px;background:#8f9296;"></div>
<div class="r" style="left:1276px;top:302px;width:1px;height:10px;background:#8f9296;"></div>
<div class="r" style="left:1288px;top:307px;width:1px;height:5px;background:#8f9296;"></div>
<div class="r" style="left:1300px;top:307px;width:1px;height:5px;background:#8f9296;"></div>
<div class="r" style="left:1312px;top:307px;width:1px;height:5px;background:#8f9296;"></div>
<div class="r" style="left:1324px;top:302px;width:1px;height:10px;background:#8f9296;"></div>
<div class="r" style="left:1336px;top:307px;width:1px;height:5px;background:#8f9296;"></div>
<div class="r" style="left:1347px;top:307px;width:1px;height:5px;background:#8f9296;"></div>
<div class="r" style="left:1359px;top:307px;width:1px;height:5px;background:#8f9296;"></div>
<div class="r" style="left:1371px;top:302px;width:1px;height:10px;background:#8f9296;"></div>
<div class="r" style="left:1383px;top:307px;width:1px;height:5px;background:#8f9296;"></div>
<div class="r" style="left:1395px;top:307px;width:1px;height:5px;background:#8f9296;"></div>
<div class="r" style="left:1407px;top:307px;width:1px;height:5px;background:#8f9296;"></div>
<div class="r" style="left:1419px;top:302px;width:1px;height:10px;background:#8f9296;"></div>
<div class="r" style="left:1431px;top:307px;width:1px;height:5px;background:#8f9296;"></div>
<div class="r" style="left:1443px;top:307px;width:1px;height:5px;background:#8f9296;"></div>
<div class="r" style="left:1455px;top:307px;width:1px;height:5px;background:#8f9296;"></div>
<div class="r" style="left:1467px;top:302px;width:1px;height:10px;background:#8f9296;"></div>
<div class="r" style="left:1479px;top:307px;width:1px;height:5px;background:#8f9296;"></div>
<div class="r" style="left:1491px;top:307px;width:1px;height:5px;background:#8f9296;"></div>
<div class="r" style="left:1502px;top:307px;width:1px;height:5px;background:#8f9296;"></div>
<div class="r" style="left:1514px;top:302px;width:1px;height:10px;background:#8f9296;"></div>
<div class="r" style="left:1526px;top:307px;width:1px;height:5px;background:#8f9296;"></div>
<div class="r" style="left:1538px;top:307px;width:1px;height:5px;background:#8f9296;"></div>
<div class="r" style="left:1550px;top:307px;width:1px;height:5px;background:#8f9296;"></div>
<div class="r" style="left:1562px;top:302px;width:1px;height:10px;background:#8f9296;"></div>
<div class="r" style="left:1574px;top:307px;width:1px;height:5px;background:#8f9296;"></div>
<div class="r" style="left:1586px;top:307px;width:1px;height:5px;background:#8f9296;"></div>
<div class="r" style="left:1598px;top:307px;width:1px;height:5px;background:#8f9296;"></div>
<div class="r" style="left:1610px;top:302px;width:1px;height:10px;background:#8f9296;"></div>
<div class="r" style="left:1622px;top:307px;width:1px;height:5px;background:#8f9296;"></div>
<div class="r" style="left:1634px;top:307px;width:1px;height:5px;background:#8f9296;"></div>
<div class="r" style="left:1645px;top:307px;width:1px;height:5px;background:#8f9296;"></div>
<div class="r" style="left:1657px;top:302px;width:1px;height:10px;background:#8f9296;"></div>
<div class="r" style="left:1669px;top:307px;width:1px;height:5px;background:#8f9296;"></div>
<div class="r" style="left:1681px;top:307px;width:1px;height:5px;background:#8f9296;"></div>
<div class="r" style="left:1693px;top:307px;width:1px;height:5px;background:#8f9296;"></div>
<div class="r" style="left:1705px;top:302px;width:1px;height:10px;background:#8f9296;"></div>
<div class="t " style="left:724.99px;top:289.30px;font-size:15px;color:#4a4d51;">2</div>
<div class="t " style="left:772.6700000000001px;top:289.30px;font-size:15px;color:#4a4d51;">1</div>
<div class="t " style="left:868.03px;top:289.30px;font-size:15px;color:#4a4d51;">1</div>
<div class="t " style="left:915.71px;top:289.30px;font-size:15px;color:#4a4d51;">2</div>
<div class="t " style="left:963.39px;top:289.30px;font-size:15px;color:#4a4d51;">3</div>
<div class="t " style="left:1011.07px;top:289.30px;font-size:15px;color:#4a4d51;">4</div>
<div class="t " style="left:1058.75px;top:289.30px;font-size:15px;color:#4a4d51;">5</div>
<div class="t " style="left:1106.4299999999998px;top:289.30px;font-size:15px;color:#4a4d51;">6</div>
<div class="t " style="left:1154.11px;top:289.30px;font-size:15px;color:#4a4d51;">7</div>
<div class="t " style="left:1201.79px;top:289.30px;font-size:15px;color:#4a4d51;">8</div>
<div class="t " style="left:1249.4699999999998px;top:289.30px;font-size:15px;color:#4a4d51;">9</div>
<div class="t " style="left:1293.0px;top:289.30px;font-size:15px;color:#4a4d51;">10</div>
<div class="t " style="left:1340.68px;top:289.30px;font-size:15px;color:#4a4d51;">11</div>
<div class="t " style="left:1388.36px;top:289.30px;font-size:15px;color:#4a4d51;">12</div>
<div class="t " style="left:1436.0400000000002px;top:289.30px;font-size:15px;color:#4a4d51;">13</div>
<div class="t " style="left:1483.72px;top:289.30px;font-size:15px;color:#4a4d51;">14</div>
<div class="t " style="left:1531.4px;top:289.30px;font-size:15px;color:#4a4d51;">15</div>
<div class="t " style="left:1579.0800000000002px;top:289.30px;font-size:15px;color:#4a4d51;">16</div>
<div class="t " style="left:1626.76px;top:289.30px;font-size:15px;color:#4a4d51;">17</div>
<div class="t " style="left:1674.44px;top:289.30px;font-size:15px;color:#4a4d51;">18</div>
<div class="r" style="left:704px;top:302px;width:1px;height:10px;background:#8f9296;"></div>
<svg class="r" style="left:815px;top:292px;" width="17" height="16" viewBox="0 0 17 16"><rect x="0" y="0" width="17" height="5" fill="#4285f4"/><path d="M0 7 H17 L8.5 15Z" fill="#4285f4"/></svg>
<svg class="r" style="left:1577px;top:298px;" width="17" height="10" viewBox="0 0 17 10"><path d="M0 0 H17 L8.5 9Z" fill="#4285f4"/></svg>
<div class="r" style="left:342px;top:312px;width:1px;height:769px;background:#d3d5d8;"></div>
<svg class="r" style="left:372px;top:340px;" width="24" height="24" viewBox="0 0 24 24"><path fill="#444746" d="M20 11H7.83l5.59-5.59L12 4l-8 8 8 8 1.41-1.41L7.83 13H20v-2z"/></svg>
<div class="t " style="left:378px;top:415.83px;font-size:19.1px;color:#3c4043;">Вкладки в документе</div>
<svg class="r" style="left:632px;top:414px;" width="23" height="23" viewBox="0 0 23 23"><path fill="#444746" d="M19 13h-6v6h-2v-6H5v-2h6V5h2v6h6v2z"/></svg>
<div class="r" style="left:363px;top:462px;width:313px;height:57px;background:#d3e3fd;border-radius:28.5px;"></div>
<svg class="r" style="left:387px;top:479px;" width="22" height="22" viewBox="0 0 22 22"><rect x="2" y="2" width="18" height="18" rx="1.5" fill="none" stroke="#152f5e" stroke-width="2.3"/><path d="M6 7 H16 M6 11 H16 M6 15 H12.5" stroke="#152f5e" stroke-width="2"/></svg>
<div class="t " style="left:422px;top:481.76px;font-size:18px;color:#1a3a80;-webkit-text-stroke:0.35px #1a3a80;">Вкладка 1</div>
<svg class="r" style="left:630px;top:478px;" width="24" height="24" viewBox="0 0 24 24"><path fill="#3c4043" d="M12 8c1.1 0 2-.9 2-2s-.9-2-2-2-2 .9-2 2 .9 2 2 2zm0 2c-1.1 0-2 .9-2 2s.9 2 2 2 2-.9 2-2-.9-2-2-2zm0 6c-1.1 0-2 .9-2 2s.9 2 2 2 2-.9 2-2-.9-2-2-2z"/></svg>
<div class="r" style="left:397.5px;top:532px;width:2.5px;height:23px;background:#1b5fd0;"></div>
<div class="r" style="left:398px;top:555px;width:1.2px;height:526px;background:#d5d7da;"></div>
<div class="t " style="left:427px;top:535.76px;font-size:18px;color:#0b57d0;">Договор поставки № ___</div>
<div class="t " style="left:441px;top:585.76px;font-size:18px;color:#3c4043;">1. Предмет договора</div>
<div class="t " style="left:441px;top:636.41px;font-size:18px;color:#3c4043;">2. Качество и комплек...</div>
<div class="t " style="left:441px;top:687.06px;font-size:18px;color:#3c4043;">3. Цена товара и поря...</div>
<div class="t " style="left:441px;top:737.71px;font-size:18px;color:#3c4043;">4. Порядок поставки</div>
<div class="t " style="left:441px;top:788.36px;font-size:18px;color:#3c4043;">5. Приемка товара</div>
<div class="t " style="left:441px;top:839.01px;font-size:18px;color:#3c4043;">6. Права и обязанност...</div>
<div class="t " style="left:441px;top:889.66px;font-size:18px;color:#3c4043;">7. Ответственность ст...</div>
<div class="t " style="left:441px;top:940.31px;font-size:18px;color:#3c4043;">8. Форс-мажор</div>
<div class="t " style="left:441px;top:990.96px;font-size:18px;color:#3c4043;">9. Порядок разрешени...</div>
<div class="t " style="left:441px;top:1041.61px;font-size:18px;color:#3c4043;">10. Срок действия дог...</div>
<div class="r" style="left:703px;top:335px;width:1004px;height:760px;background:#fff;box-shadow:0 0 0 1px #d9dbde;"></div>
<div class="r" style="left:1792px;top:318px;width:10px;height:62px;background:#dadce0;border-radius:5px;"></div>
<div class="t dl" style="left:824px;top:524.13px;font-size:38.6px;transform:scaleY(1.09);transform-origin:0 32.67px;"><b>Договор поставки №</b></div>
<div class="r" style="left:1236px;top:553px;width:66px;height:3.2px;background:#000;"></div>
<div class="t dl" style="left:824px;top:599.70px;font-size:18.55px;transform:scaleY(1.15);transform-origin:0 15.70px;">г. <span style="display:inline-block;width:124px;height:1.1px;background:#000;vertical-align:-3px;"></span></div>
<div class="t " style="left:829px;top:625.80px;font-size:18.55px;color:#000;"></div>
<div class="t dl" style="left:829px;top:626.80px;font-size:18.55px;transform:scaleY(1.15);transform-origin:0 15.70px;"><b>«_» </b><span style="display:inline-block;width:103px;height:2.2px;background:#000;vertical-align:-3px;"></span><b> 20</b> г.</div>
<div class="t dl" style="left:824px;top:676.30px;font-size:18.55px;transform:scaleY(1.15);transform-origin:0 15.70px;"><b>ООО «Ореон»</b>, именуемое в дальнейшем <b>«Поставщик»</b>, в лице</div>
<div class="t dl" style="left:824px;top:703.80px;font-size:18.55px;transform:scaleY(1.15);transform-origin:0 15.70px;"><span style="display:inline-block;width:227px;height:1.1px;background:#000;vertical-align:-3.5px;"></span><b>, действующего на основании </b><span style="display:inline-block;width:206px;height:2.2px;background:#000;vertical-align:-3.5px;"></span><b>, с</b></div>
<div class="t dl" style="left:824px;top:731.30px;font-size:18.55px;transform:scaleY(1.15);transform-origin:0 15.70px;"><b>одной стороны, и</b></div>
<div class="t dl" style="left:824px;top:758.60px;font-size:18.55px;transform:scaleY(1.15);transform-origin:0 15.70px;"> **<span style="display:inline-block;width:208px;height:1.1px;background:#000;vertical-align:-3.5px;"></span>**, именуемое в дальнейшем <b>«Покупатель»</b>, в лице</div>
<div class="t dl" style="left:824px;top:785.80px;font-size:18.55px;transform:scaleY(1.15);transform-origin:0 15.70px;"><span style="display:inline-block;width:248px;height:1.1px;background:#000;vertical-align:-3.5px;"></span>, действующего на основании</div>
<div class="t dl" style="left:824px;top:813.10px;font-size:18.55px;transform:scaleY(1.15);transform-origin:0 15.70px;"><span style="display:inline-block;width:248px;height:1.1px;background:#000;vertical-align:-3.5px;"></span>, с другой стороны, совместно именуемые <b>«Стороны»</b>,</div>
<div class="t dl" style="left:824px;top:840.50px;font-size:18.55px;transform:scaleY(1.15);transform-origin:0 15.70px;">заключили настоящий договор о нижеследующем.</div>
<div class="t dl" style="left:824px;top:902.79px;font-size:28.6px;transform:scaleY(1.05);transform-origin:0 24.21px;"><b>1. Предмет договора</b></div>
<div class="t dl" style="left:824px;top:966.30px;font-size:18.55px;transform:scaleY(1.15);transform-origin:0 15.70px;">1.1. Поставщик обязуется передавать в собственность Покупателю товары, а</div>
<div class="t dl" style="left:824px;top:993.60px;font-size:18.55px;transform:scaleY(1.15);transform-origin:0 15.70px;">Покупатель обязуется принимать и оплачивать их на условиях настоящего договора.</div>
<div class="t dl" style="left:824px;top:1043.30px;font-size:18.55px;transform:scaleY(1.15);transform-origin:0 15.70px;">1.2. Наименование, ассортимент, количество, цена, сроки поставки и иные</div>
<div class="t dl" style="left:824px;top:1070.60px;font-size:18.55px;transform:scaleY(1.15);transform-origin:0 15.70px;">характеристики товара согласовываются Сторонами в:</div>
</div>
<div class="r" style="left:735px;top:330px;width:969px;height:756px;border:6px solid #e85352;border-radius:14px;box-sizing:border-box;box-shadow:0 0 30px rgba(232,83,82,0.3);"></div>
<div class="r" style="left:1678.5px;top:304.5px;width:51px;height:51px;background:#e85352;border-radius:50%;"></div>
<svg class="r" style="left:1694px;top:318.5px;" width="21" height="23" viewBox="0 0 21 23"><path fill="#fff" d="M9.8 0 H15.8 L6.4 13.6 H11.6 V9.2 H16.6 V13.6 H20.6 V18.2 H16.6 V22.5 H11.6 V18.2 H0.6 V14.2Z"/></svg>
<div class="r" style="left:1757px;top:35px;width:52px;height:52px;border:6px solid #e85352;border-radius:16px;box-sizing:border-box;box-shadow:0 0 22px rgba(232,83,82,0.3);"></div>
<div class="r" style="left:1782px;top:8.5px;width:51px;height:51px;background:#e85352;border-radius:50%;"></div>
<svg class="r" style="left:1798px;top:23px;" width="19" height="24" viewBox="0 0 19 24"><path fill="none" stroke="#fff" stroke-width="4.5" stroke-linejoin="miter" d="M16.8 2.7 H5.4 L4.6 10 H9.6 A6.2 5.1 0 0 1 9.6 20.2 Q4.8 20.2 2 17.8"/></svg>
</body></html>
